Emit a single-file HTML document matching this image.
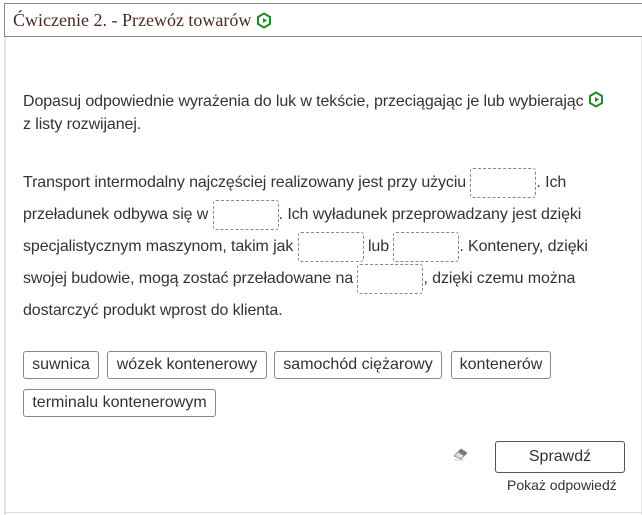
<!DOCTYPE html>
<html><head><meta charset="utf-8"><style>
body{margin:0;width:642px;height:515px;background:#fff;position:relative;overflow:hidden;font-family:"Liberation Sans",Roboto,sans-serif;color:#333;font-size:16px}
.title{position:absolute;left:4px;top:3px;width:640px;height:34px;border:1px solid #8a8a8a;box-sizing:border-box;font-family:"Liberation Serif",serif;font-size:18px;color:#4a2a20;line-height:32px;padding-left:8px}
.lb{position:absolute;left:4px;top:37px;width:2px;height:478px;background:#e4e4e4}
.rb{position:absolute;right:0;top:37px;width:1px;height:478px;background:#e4e4e4}
.bb{position:absolute;left:4px;top:512px;width:640px;height:1px;background:#ddd}
.l{position:absolute;left:23px;white-space:nowrap;letter-spacing:-0.1px}
.gap{display:inline-block;width:66px;height:30px;border:1px dashed #888;border-radius:3px;vertical-align:middle;box-sizing:border-box}
.chip{position:absolute;height:28px;border:1px solid #888;border-radius:3px;box-sizing:border-box;line-height:26px;text-align:center;font-size:16px;color:#333;white-space:nowrap}
.btn{position:absolute;left:495px;top:441px;width:130px;height:32px;border:1px solid #555;border-radius:3px;box-sizing:border-box;text-align:center;line-height:30px;font-size:16px}
</style></head><body>
<div class="title">Ćwiczenie 2. - Przewóz towarów <svg width="16" height="17" viewBox="0 0 16 17" style="vertical-align:-3px"><polygon points="8,1.5 14,5 14,12 8,15.5 2,12 2,5" fill="none" stroke="#1f8a2a" stroke-width="2"/><polygon points="7,6 11,8.5 7,11" fill="#1f8a2a"/></svg></div>
<div class="lb"></div><div class="rb"></div><div class="bb"></div>
<div class="l" style="top:91px">Dopasuj odpowiednie wyrażenia do luk w tekście, przeciągając je lub wybierając <svg width="16" height="17" viewBox="0 0 16 17" style="vertical-align:-2px"><polygon points="8,1.5 14,5 14,12 8,15.5 2,12 2,5" fill="none" stroke="#1f8a2a" stroke-width="2"/><polygon points="7,6 11,8.5 7,11" fill="#1f8a2a"/></svg></div>
<div class="l" style="top:116px">z listy rozwijanej.</div>
<div class="l" style="top:168px;line-height:30px">Transport intermodalny najczęściej realizowany jest przy użyciu <span class="gap"></span>. Ich</div>
<div class="l" style="top:200px;line-height:30px">przeładunek odbywa się w <span class="gap"></span>. Ich wyładunek przeprowadzany jest dzięki</div>
<div class="l" style="top:232px;line-height:30px">specjalistycznym maszynom, takim jak <span class="gap"></span> lub <span class="gap"></span>. Kontenery, dzięki</div>
<div class="l" style="top:264px;line-height:30px">swojej budowie, mogą zostać przeładowane na <span class="gap"></span>, dzięki czemu można</div>
<div class="l" style="top:302px">dostarczyć produkt wprost do klienta.</div>
<div class="chip" style="left:23px;top:351px;width:76px">suwnica</div>
<div class="chip" style="left:107px;top:351px;width:160px">wózek kontenerowy</div>
<div class="chip" style="left:274px;top:351px;width:168px">samochód ciężarowy</div>
<div class="chip" style="left:451px;top:351px;width:100px">kontenerów</div>
<div class="chip" style="left:23px;top:389px;width:193px">terminalu kontenerowym</div>
<svg style="position:absolute;left:452px;top:447px" width="18" height="14" viewBox="0 0 18 14"><path d="M2 9 L9 2 L15 6 L9 12 Z" fill="#ddd" stroke="#999"/><path d="M9 2 L15 6 L12 9 L6 5Z" fill="#777"/><line x1="2" y1="13" x2="12" y2="13" stroke="#ccc"/></svg>
<div class="btn">Sprawdź</div>
<div style="position:absolute;left:507px;top:477px;font-size:14px;color:#333">Pokaż odpowiedź</div>
</body></html>
